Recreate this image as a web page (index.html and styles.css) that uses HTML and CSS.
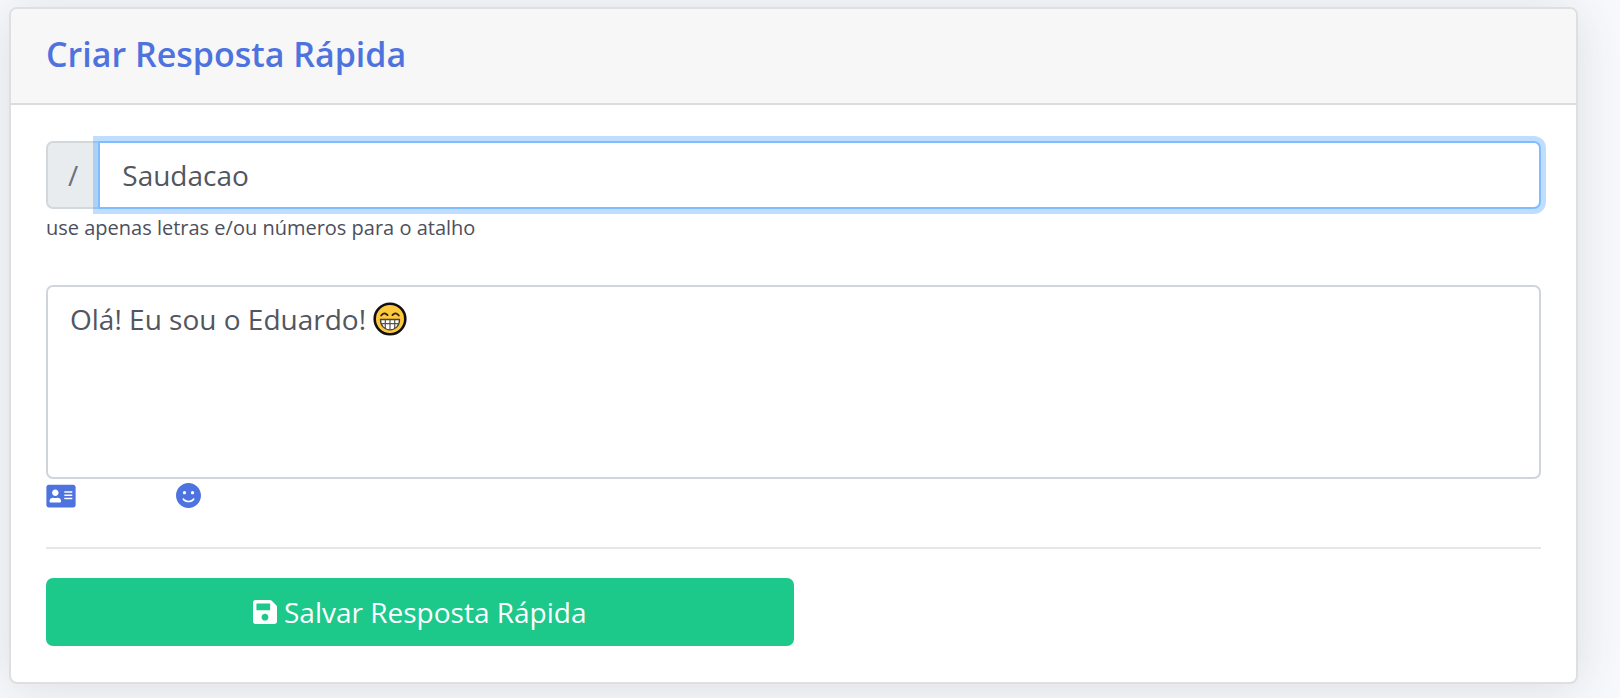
FILE: index.html
```html
<!DOCTYPE html>
<html lang="pt-BR">
<head>
<meta charset="utf-8">
<meta name="viewport" content="width=device-width, initial-scale=1">
<title>Criar Resposta Rápida</title>
<link rel="stylesheet" href="styles.css">
</head>
<body>
<main class="page">
  <section class="card">
    <header class="card-header">
      <h1 class="card-title">Criar Resposta Rápida</h1>
    </header>
    <form class="card-body">
      <div class="input-group">
        <label class="input-prefix" for="shortcut">/</label>
        <input class="control shortcut" id="shortcut" type="text" value="Saudacao" aria-describedby="shortcut-help">
      </div>
      <small class="help" id="shortcut-help">use apenas letras e/ou números para o atalho</small>
      <div class="message">
        <textarea class="control message-text" aria-label="Mensagem">Olá! Eu sou o Eduardo!</textarea>
        <svg class="emoji" viewBox="0 0 34 34" role="img" aria-label="Rosto sorridente">
          <circle cx="17" cy="17" r="15.3" fill="#ffc83d" stroke="#111" stroke-width="2.6"/>
          <path d="M8.2 13.5q3-4.2 6.4-.4M19.4 13.1q3.400-3.800 6.400.4" fill="none" stroke="#2b2410" stroke-width="1.800" stroke-linecap="round"/>
          <path d="M7.500 17.500h19c.2 6-4 10.300-9.500 10.300S7.300 23.500 7.500 17.500z" fill="#fff" stroke="#4a4434" stroke-width="1.300"/>
          <path d="M8 21.600h18M12.300 17.500v8.500M17 17.500v10M21.700 17.500v8.500" fill="none" stroke="#55534f" stroke-width="1.200"/>
        </svg>
      </div>
      <div class="tools">
        <button class="tool" type="button" aria-label="Inserir contato">
          <svg class="icon-card" viewBox="0 0 576 512" aria-hidden="true"><path fill="currentColor" fill-rule="evenodd" d="M528 32H48C21.500 32 0 53.500 0 80v352c0 26.500 21.500 48 48 48h480c26.500 0 48-21.500 48-48V80c0-26.500-21.500-48-48-48zM176 128c35.300 0 64 28.700 64 64s-28.700 64-64 64-64-28.700-64-64 28.700-64 64-64zm112 236.800c0 10.600-10 19.200-22.400 19.200H86.400C74 384 64 375.400 64 364.800v-19.200c0-31.800 30.100-57.600 67.200-57.600h5c12.300 5.100 25.700 8 39.800 8s27.600-2.900 39.800-8h5c37.100 0 67.200 25.800 67.200 57.600v19.200zM512 312c0 4.400-3.600 8-8 8H360c-4.400 0-8-3.600-8-8v-16c0-4.400 3.600-8 8-8h144c4.400 0 8 3.600 8 8v16zm0-64c0 4.400-3.600 8-8 8H360c-4.400 0-8-3.600-8-8v-16c0-4.400 3.600-8 8-8h144c4.400 0 8 3.600 8 8v16zm0-64c0 4.400-3.600 8-8 8H360c-4.400 0-8-3.600-8-8v-16c0-4.400 3.600-8 8-8h144c4.400 0 8 3.600 8 8v16z"/></svg>
        </button>
        <button class="tool" type="button" aria-label="Inserir emoji">
          <svg class="icon-smile" viewBox="0 0 496 496" aria-hidden="true"><path fill="currentColor" fill-rule="evenodd" d="M248 0C111 0 0 111 0 248s111 248 248 248 248-111 248-248S385 0 248 0zm80 160c17.700 0 32 14.300 32 32s-14.300 32-32 32-32-14.300-32-32 14.300-32 32-32zm-160 0c17.700 0 32 14.300 32 32s-14.300 32-32 32-32-14.300-32-32 14.300-32 32-32zm194.800 170.200C334.300 364.400 292.500 384 248 384s-86.300-19.600-114.800-53.800c-13.600-16.300 11-36.700 24.600-20.500 22.400 26.900 55.200 42.200 90.200 42.200s67.800-15.400 90.200-42.200c13.400-16.200 38.100 4.200 24.600 20.500z"/></svg>
        </button>
      </div>
      <hr class="divider">
      <button class="save" type="submit">
        <svg class="icon-save" viewBox="0 0 448 448" aria-hidden="true"><path fill="currentColor" fill-rule="evenodd" d="M433.900 97.900l-83.900-83.900A48 48 0 0 0 316.100 0H48C21.500 0 0 21.500 0 48v352c0 26.500 21.500 48 48 48h352c26.500 0 48-21.500 48-48V131.900a48 48 0 0 0-14.100-34zM224 384c-35.300 0-64-28.700-64-64s28.700-64 64-64 64 28.700 64 64-28.700 64-64 64zm96-304.500V180c0 6.600-5.400 12-12 12H76c-6.600 0-12-5.400-12-12V76c0-6.600 5.400-12 12-12h228.500c3.200 0 6.200 1.300 8.500 3.500l3.500 3.500a12 12 0 0 1 3.500 8.500z"/></svg>
        Salvar Resposta Rápida
      </button>
    </form>
  </section>
</main>
</body>
</html>
```

FILE: styles.css
```css
* { box-sizing: border-box; }

body {
  margin: 0;
  background: #f8f9fc;
  color: #4d4f5c;
  font-family: "Open Sans", "Noto Sans", sans-serif;
  font-size: 28px;
}

.page { padding: 7px 42px 14px 9px; }

.card {
  background: #fff;
  border: 2px solid #dfdfe1;
  border-radius: 8px;
  box-shadow: 0 4px 50px rgba(58, 59, 69, 0.15);
}

.card-header {
  padding: 25px 35px 29px;
  background: #f7f7f7;
  border-bottom: 2px solid #dcdcdc;
  border-radius: 6px 6px 0 0;
}

.card-title {
  margin: 0;
  color: #4e73df;
  font-size: 34px;
  font-weight: 600;
  line-height: 40px;
}

.card-body { padding: 36px 35px; }

.input-group { display: flex; }

.input-prefix {
  display: flex;
  align-items: center;
  padding: 0 20px;
  background: #e9ecef;
  border: 2px solid #d3d8dd;
  border-right: 0;
  border-radius: 7px 0 0 7px;
  color: #6e707e;
}

.control {
  display: block;
  width: 100%;
  margin: 0;
  background: #fff;
  border: 2px solid #d0d5db;
  border-radius: 7px;
  outline: 0;
  color: #52565e;
  font: inherit;
  line-height: 42px;
}

.shortcut {
  flex: 1;
  min-width: 0;
  height: 68px;
  padding: 0 22px;
  border-color: #80bdff;
  border-radius: 0 7px 7px 0;
  box-shadow: 0 0 0 5px rgba(0, 123, 255, 0.25);
}

.help {
  display: block;
  margin-top: 5px;
  font-size: 20px;
  line-height: 28px;
}

.message {
  position: relative;
  margin-top: 43px;
}

.message-text {
  height: 194px;
  padding: 11px 22px;
  resize: none;
}

.emoji {
  position: absolute;
  top: 17px;
  left: 327px;
  width: 34px;
  height: 34px;
}

.tools {
  display: flex;
  gap: 100px;
  margin-top: 4px;
}

.tool {
  display: flex;
  align-items: center;
  height: 25px;
  padding: 0;
  background: none;
  border: 0;
  color: #4e73df;
}

.icon-card { width: 30px; height: 26px; }
.icon-smile { width: 25px; height: 25px; }

.divider {
  margin: 39px 0 29px;
  border: 0;
  border-top: 2px solid #e6e6e6;
}

.save {
  display: flex;
  align-items: center;
  justify-content: center;
  gap: 7px;
  width: 50%;
  height: 68px;
  padding: 0;
  background: #1cc88a;
  border: 0;
  border-radius: 7px;
  color: #fff;
  font: inherit;
  font-weight: 500;
}

.icon-save { width: 24px; height: 24px; }
```
